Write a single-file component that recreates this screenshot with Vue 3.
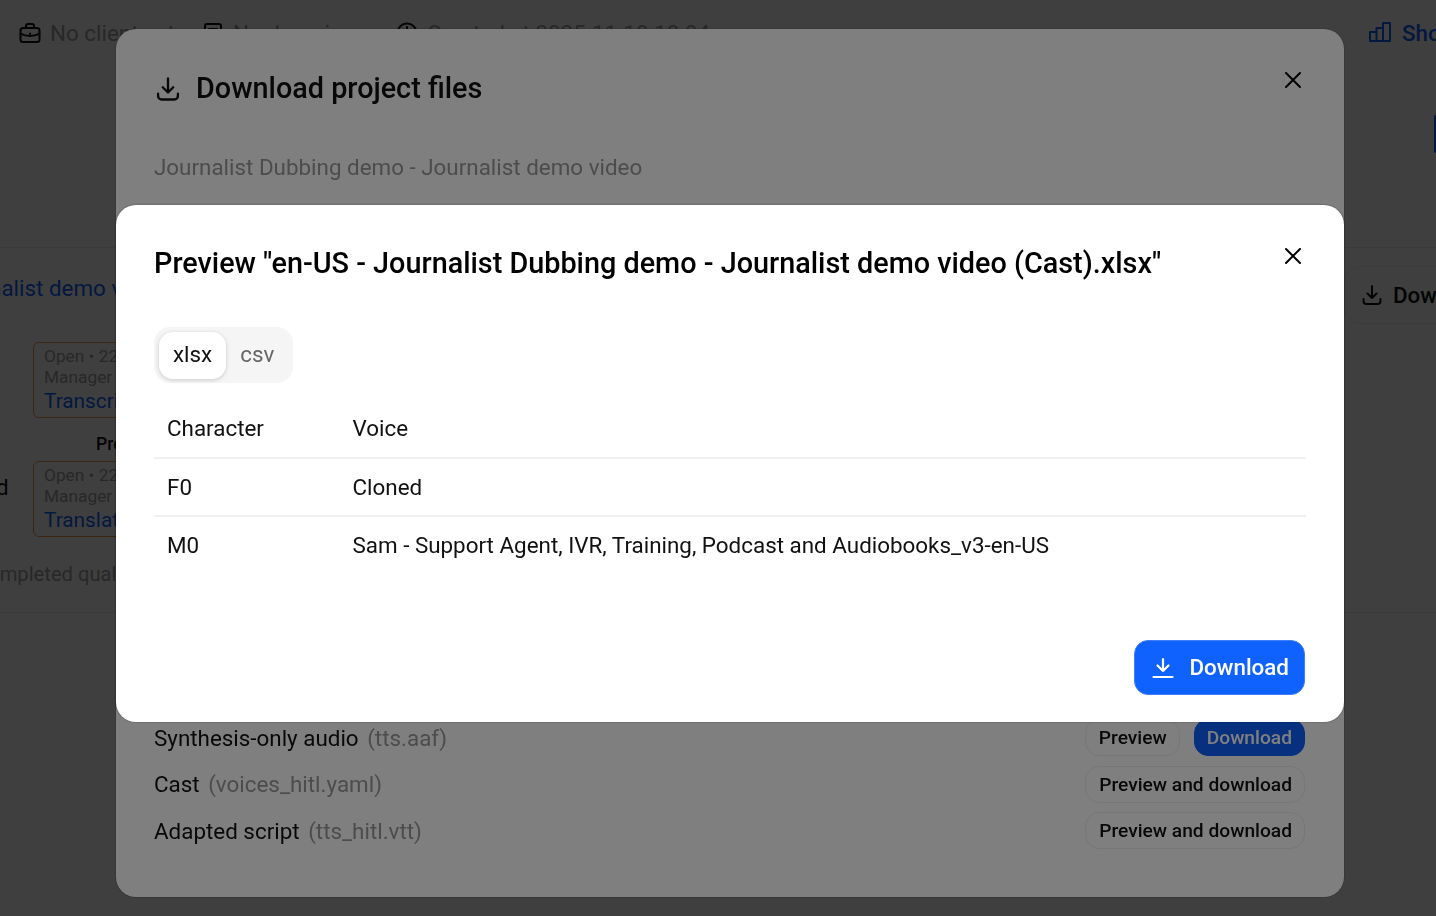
<template>
  <div class="page">
    <div class="meta-row">
      <div class="meta-left">
        <span class="meta-item">
          <svg class="ico" viewBox="0 0 24 24"><rect x="2.5" y="7" width="19" height="14" rx="2.5" /><path d="M8 7V5a2 2 0 0 1 2-2h4a2 2 0 0 1 2 2v2M2.500 12.500c3 2 6 2.500 9.500 2.500s6.500-.5 9.500-2.500" /><path d="M12 12.500v.5" /></svg>
          No client set
        </span>
        <span class="meta-item">
          <svg class="ico" viewBox="0 0 24 24"><rect x="4" y="3" width="16" height="18" rx="2" /><path d="M8 8h8M8 12h8" /></svg>
          No domain
        </span>
        <span class="meta-item">
          <svg class="ico" viewBox="0 0 24 24"><circle cx="12" cy="12" r="9.500" /><path d="M12 6v6l4 2" /></svg>
          Created at 2025-11-18 18:04
        </span>
      </div>
      <span class="stats-link">
        <svg class="ico" viewBox="0 0 24 24"><path d="M2 11h6.500v9H2zM8.500 7h6.500v13H8.500zM15 2h7v18h-7z" /></svg>
        Show stats
      </span>
    </div>
    <div class="hero">
      <span class="hero-btn"></span>
    </div>
    <section class="workflow">
      <div class="workflow-head">
        <span class="video-title">Journalist demo video</span>
        <span class="head-btn">
          <svg class="ico" viewBox="0 0 24 24"><path d="M12 3v12M7.500 10.500 12 15l4.500-4.500M3.500 16v2a3 3 0 0 0 3 3h11a3 3 0 0 0 3-3v-2" /></svg>
          Download
        </span>
      </div>
      <div class="task">
        <small>Open • 22 items</small>
        <small>Manager</small>
        <a>Transcription</a>
      </div>
      <div class="task-label">Pre-edit</div>
      <div class="task-row">
        <span class="stray">d</span>
        <div class="task">
          <small>Open • 22 items</small>
          <small>Manager</small>
          <a>Translation</a>
        </div>
      </div>
      <p class="quality">Completed quality</p>
    </section>
  </div>

  <div class="overlay">
    <div class="modal modal-files">
      <button class="close">
        <svg viewBox="0 0 24 24"><path d="M5 5l14 14M19 5 5 19" /></svg>
      </button>
      <h2 class="files-title">
        <svg class="ico" viewBox="0 0 24 24"><path d="M12 3v12M7.500 10.500 12 15l4.500-4.500M3.500 16v2a3 3 0 0 0 3 3h11a3 3 0 0 0 3-3v-2" /></svg>
        Download project files
      </h2>
      <p class="files-sub">Journalist Dubbing demo - Journalist demo video</p>
      <ul class="files">
        <li v-for="file in files" :key="file.name">
          <span>{{ file.name }} <em>({{ file.path }})</em></span>
          <span class="file-actions">
            <button v-if="file.split" class="ghost">Preview</button>
            <button v-if="file.split" class="solid">Download</button>
            <button v-else class="ghost">Preview and download</button>
          </span>
        </li>
      </ul>
    </div>
  </div>

  <div class="overlay">
    <div class="modal modal-preview">
      <button class="close">
        <svg viewBox="0 0 24 24"><path d="M5 5l14 14M19 5 5 19" /></svg>
      </button>
      <h2 class="preview-title">Preview "en-US - Journalist Dubbing demo - Journalist demo video (Cast).xlsx"</h2>
      <div class="segment">
        <span class="seg active">xlsx</span>
        <span class="seg">csv</span>
      </div>
      <table class="cast">
        <thead>
          <tr><th>Character</th><th>Voice</th></tr>
        </thead>
        <tbody>
          <tr v-for="row in cast" :key="row.character">
            <td>{{ row.character }}</td>
            <td>{{ row.voice }}</td>
          </tr>
        </tbody>
      </table>
      <div class="preview-foot">
        <button class="primary">
          <svg viewBox="0 0 24 24"><path d="M12 3v12M6.500 9.500 12 15l5.500-5.500M2.500 21h19" /></svg>
          Download
        </button>
      </div>
    </div>
  </div>
</template>

<script setup>
const files = [
  { name: "Synthesis-only audio", path: "tts.aaf", split: true },
  { name: "Cast", path: "voices_hitl.yaml" },
  { name: "Adapted script", path: "tts_hitl.vtt" },
];

const cast = [
  { character: "F0", voice: "Cloned" },
  { character: "M0", voice: "Sam - Support Agent, IVR, Training, Podcast and Audiobooks_v3-en-US" },
];
</script>

<style>
html,
body {
  margin: 0;
  background: #fff;
}
</style>

<style scoped>
.page {
  height: 916px;
  overflow: hidden;
  background: #fff;
  color: #111;
  font-family: Roboto, "Liberation Sans", sans-serif;
  font-size: 22.4px;
}

.ico {
  width: 24px;
  height: 24px;
  flex: none;
  fill: none;
  stroke: currentColor;
  stroke-width: 2;
  stroke-linecap: round;
  stroke-linejoin: round;
}

.meta-row {
  display: flex;
  justify-content: space-between;
  padding: 19px 0 0 18px;
  height: 28px;
  white-space: nowrap;
  overflow: hidden;
}

.meta-left {
  display: grid;
  grid-template-columns: 183px 194px auto;
}

.meta-item {
  display: flex;
  align-items: center;
  gap: 8px;
  color: #a0a0a0;
}

.meta-item .ico {
  color: #111;
}

.stats-link {
  display: flex;
  align-items: center;
  gap: 10px;
  width: 68px;
  color: #0f62fe;
  font-weight: 500;
}

.hero {
  height: 200px;
  display: flex;
  justify-content: flex-end;
  padding-top: 68px;
  box-sizing: border-box;
}

.hero-btn {
  width: 2px;
  height: 38px;
  background: #0f62fe;
  border-radius: 8px 0 0 8px;
}

.workflow {
  height: 366px;
  box-sizing: border-box;
  border-top: 1px solid #e8e8e8;
  border-bottom: 1px solid #e8e8e8;
}

.workflow-head {
  display: flex;
  justify-content: space-between;
  align-items: center;
  padding-top: 19px;
  height: 56px;
  white-space: nowrap;
}

.video-title {
  align-self: flex-start;
  margin: 8px 0 0 -56px;
  color: #0f62fe;
}

.head-btn {
  display: flex;
  align-items: center;
  gap: 9px;
  width: 77px;
  height: 56px;
  padding-left: 15px;
  margin-right: -1px;
  border: 1px solid #eee;
  border-right: 0;
  border-radius: 16px 0 0 16px;
  font-weight: 500;
}

.task {
  width: 200px;
  height: 76px;
  box-sizing: border-box;
  margin: 19px 0 0 33px;
  padding: 3px 10px;
  border: 1px solid #e8954a;
  border-radius: 6px;
  display: flex;
  flex-direction: column;
  white-space: nowrap;
}

.task small {
  font-size: 17.3px;
  line-height: 21px;
  color: #a0a0a0;
}

.task a {
  font-size: 20.8px;
  line-height: 27px;
  color: #0f62fe;
}

.task-label {
  margin: 16px 0 0 96px;
  font-size: 17.6px;
  font-weight: 500;
  line-height: 20px;
}

.task-row {
  display: flex;
  align-items: center;
  position: relative;
}

.task-row .task {
  margin-top: 7px;
}

.stray {
  position: absolute;
  left: -4px;
  top: 20px;
  font-size: 22.4px;
}

.quality {
  margin: 25px 0 0 -25px;
  font-size: 20.2px;
  line-height: 24px;
  color: #a0a0a0;
  white-space: nowrap;
}

.overlay {
  position: fixed;
  inset: 0;
  padding-left: 24px;
  background: rgba(0, 0, 0, 0.5);
  display: flex;
  justify-content: center;
  align-items: flex-start;
  font-family: Roboto, "Liberation Sans", sans-serif;
  color: #111;
}

.modal {
  position: relative;
  width: 1228px;
  box-sizing: border-box;
  background: #fff;
  border-radius: 20px;
  box-shadow: 0 0 2px rgba(0, 0, 0, 0.4);
}

button {
  font-family: inherit;
  cursor: pointer;
}

.close {
  position: absolute;
  top: 39px;
  right: 39px;
  width: 24px;
  height: 24px;
  padding: 0;
  border: 0;
  background: none;
}

.close svg {
  display: block;
  fill: none;
  stroke: #000;
  stroke-width: 2;
  stroke-linecap: round;
}

.modal-files {
  height: 868px;
  margin-top: 29px;
  padding: 41px 39px 43px 38px;
  display: flex;
  flex-direction: column;
}

.files-title {
  margin: 0;
  display: flex;
  align-items: center;
  gap: 14px;
  height: 36px;
  font-size: 28.8px;
  font-weight: 500;
}

.files-title .ico {
  margin-top: 2px;
  width: 28px;
  height: 28px;
}

.files-sub {
  margin: 47px 0 0;
  font-size: 22.4px;
  line-height: 28px;
  color: #999;
}

.files {
  list-style: none;
  margin: auto 0 0;
  padding: 0;
  font-size: 22.4px;
}

.files li {
  display: flex;
  justify-content: space-between;
  align-items: center;
  height: 46.5px;
}

.files em {
  font-style: normal;
  color: #999;
  margin-left: 3px;
}

.file-actions {
  display: flex;
  gap: 14px;
}

.ghost,
.solid {
  height: 37px;
  padding: 0 12px 0 13px;
  border-radius: 14px;
  border: 1px solid #eee;
  background: #fff;
  color: #111;
  font-size: 19.2px;
  font-weight: 500;
}

.solid {
  padding: 0 12px;
  background: #0f62fe;
  border-color: #0f62fe;
  color: #fff;
}

.modal-preview {
  height: 517px;
  margin-top: 205px;
  padding: 40px 38px 0;
}

.preview-title {
  margin: 0;
  font-size: 28.8px;
  line-height: 36px;
  font-weight: 500;
  color: #000;
}

.segment {
  display: inline-flex;
  box-sizing: border-box;
  margin-top: 46px;
  height: 56px;
  padding: 5px;
  background: #f5f5f5;
  border-radius: 16px;
  font-size: 22.4px;
}

.seg {
  display: flex;
  align-items: center;
  height: 47px;
  box-sizing: border-box;
  padding: 0 14px 3px;
  color: #666;
}

.seg.active {
  background: #fff;
  color: #111;
  border-radius: 14px;
  box-shadow: 0 1px 4px rgba(0, 0, 0, 0.18);
}

.cast {
  display: table;
  width: 1152px;
  margin-top: 16px;
  border-collapse: collapse;
  font-size: 22.4px;
}

.cast th {
  height: 58px;
  font-weight: 400;
  text-align: left;
}

.cast th,
.cast td {
  padding: 0 13px;
}

.cast th:first-child,
.cast td:first-child {
  width: 159.5px;
}

.cast td {
  height: 56px;
  border-top: 2px solid #f0f0f0;
}

.preview-foot {
  position: absolute;
  right: 39px;
  bottom: 27px;
}

.primary {
  display: flex;
  align-items: center;
  gap: 14px;
  height: 55px;
  padding: 0 15px 2px 16px;
  background: #0f62fe;
  border: 1px solid #3f7ffc;
  border-radius: 14px;
  color: #fff;
  font-size: 22.4px;
  font-weight: 500;
}

.primary svg {
  width: 24px;
  height: 24px;
  margin-bottom: -2px;
  fill: none;
  stroke: #fff;
  stroke-width: 2.2;
  stroke-linecap: round;
  stroke-linejoin: round;
}
</style>
